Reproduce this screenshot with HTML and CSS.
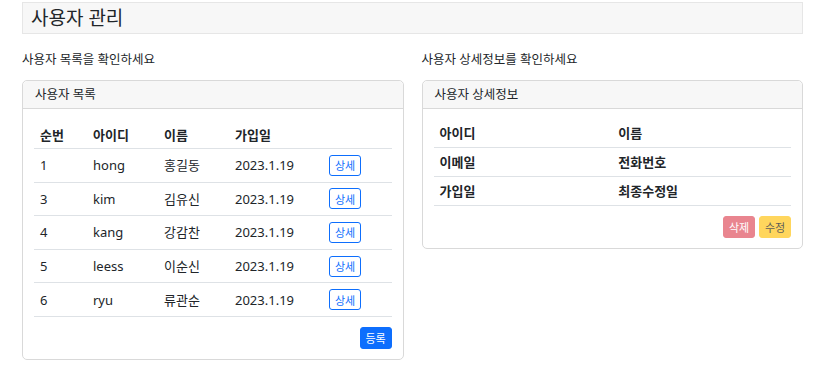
FILE: index.html
```html
<!DOCTYPE html>
<html lang="ko">
<head>
    <meta charset="UTF-8">
    <title>사용자 관리</title>
    <link rel="stylesheet" href="styles.css">
</head>
<body>

<div class="page">
    <h1 class="title">사용자 관리</h1>

    <div class="columns">
        <div class="col">
            <p class="lead">사용자 목록을 확인하세요</p>
            <div class="card">
                <div class="card-header">사용자 목록</div>
                <div class="card-body">
                    <table class="list">
                        <thead>
                        <tr>
                            <th class="c-no">순번</th>
                            <th class="c-id">아이디</th>
                            <th class="c-name">이름</th>
                            <th class="c-date">가입일</th>
                            <th></th>
                        </tr>
                        </thead>
                        <tbody>
                        <tr><td>1</td><td>hong</td><td>홍길동</td><td>2023.1.19</td><td><button class="btn btn-outline">상세</button></td></tr>
                        <tr><td>3</td><td>kim</td><td>김유신</td><td>2023.1.19</td><td><button class="btn btn-outline">상세</button></td></tr>
                        <tr><td>4</td><td>kang</td><td>강감찬</td><td>2023.1.19</td><td><button class="btn btn-outline">상세</button></td></tr>
                        <tr><td>5</td><td>leess</td><td>이순신</td><td>2023.1.19</td><td><button class="btn btn-outline">상세</button></td></tr>
                        <tr><td>6</td><td>ryu</td><td>류관순</td><td>2023.1.19</td><td><button class="btn btn-outline">상세</button></td></tr>
                        </tbody>
                    </table>
                    <div class="actions">
                        <button class="btn btn-primary">등록</button>
                    </div>
                </div>
            </div>
        </div>

        <div class="col">
            <p class="lead">사용자 상세정보를 확인하세요</p>
            <div class="card">
                <div class="card-header">사용자 상세정보</div>
                <div class="card-body">
                    <table class="detail">
                        <tr><th>아이디</th><th>이름</th></tr>
                        <tr><th>이메일</th><th>전화번호</th></tr>
                        <tr><th>가입일</th><th>최종수정일</th></tr>
                    </table>
                    <div class="actions">
                        <button class="btn btn-danger" disabled>삭제</button>
                        <button class="btn btn-warning" disabled>수정</button>
                    </div>
                </div>
            </div>
        </div>
    </div>
</div>

</body>
</html>
```

FILE: styles.css
```css
body { margin: 0; font-family: "Noto Sans", "Noto Sans CJK KR", sans-serif; font-size: 13px; color: #212529; background: #fff; }
.page { padding: 2px 15px 0 22px; }
.title { margin: 0; height: 32px; box-sizing: border-box; padding: 0 8px; font-size: 19px; font-weight: normal; line-height: 31px; background: #f7f7f7; border: 1px solid #e6e6e6; }
.columns { display: flex; gap: 18px; }
.col { flex: 1; }
.lead { margin: 17px 0 11px; line-height: 18px; font-size: 12.5px; }
.card { border: 1px solid #d9d9d9; border-radius: 5px; background: #fff; }
.card-header { height: 27px; line-height: 27px; padding: 0 12px; background: #f7f7f7; border-bottom: 1px solid #d9d9d9; border-radius: 5px 5px 0 0; font-size: 12.5px; }
.card-body { padding: 11px 11px 10px; }
table { width: 100%; border-collapse: collapse; }
th, td { text-align: left; padding: 5px 6px; line-height: 18px; border-bottom: 1px solid #dee2e6; }
th { font-weight: bold; }
.list th { padding: 6px 6px 4px; }
.list td { padding: 5.8px 6px; height: 21px; }
.c-no { width: 41px; }
.c-id { width: 59px; }
.c-name { width: 59px; }
.c-date { width: 82px; }
.detail th { width: 50%; padding: 5px 6px; }
.detail tr:first-child th { padding-top: 4px; }
.actions { display: flex; justify-content: flex-end; gap: 4px; margin-top: 10px; }
.btn { font-family: inherit; font-size: 11px; height: 22px; width: 32px; padding: 0; border-radius: 3px; border: 1px solid transparent; cursor: pointer; }
.btn-outline { height: 21px; background: #fff; color: #0d6efd; border-color: #0d6efd; }
.btn-primary { background: #0d6efd; color: #fff; border-color: #0d6efd; }
.btn-danger { background: #dc3545; color: #fff; border-color: #dc3545; opacity: .6; }
.btn-warning { background: #ffc107; color: #000; border-color: #ffc107; opacity: .65; }
```
